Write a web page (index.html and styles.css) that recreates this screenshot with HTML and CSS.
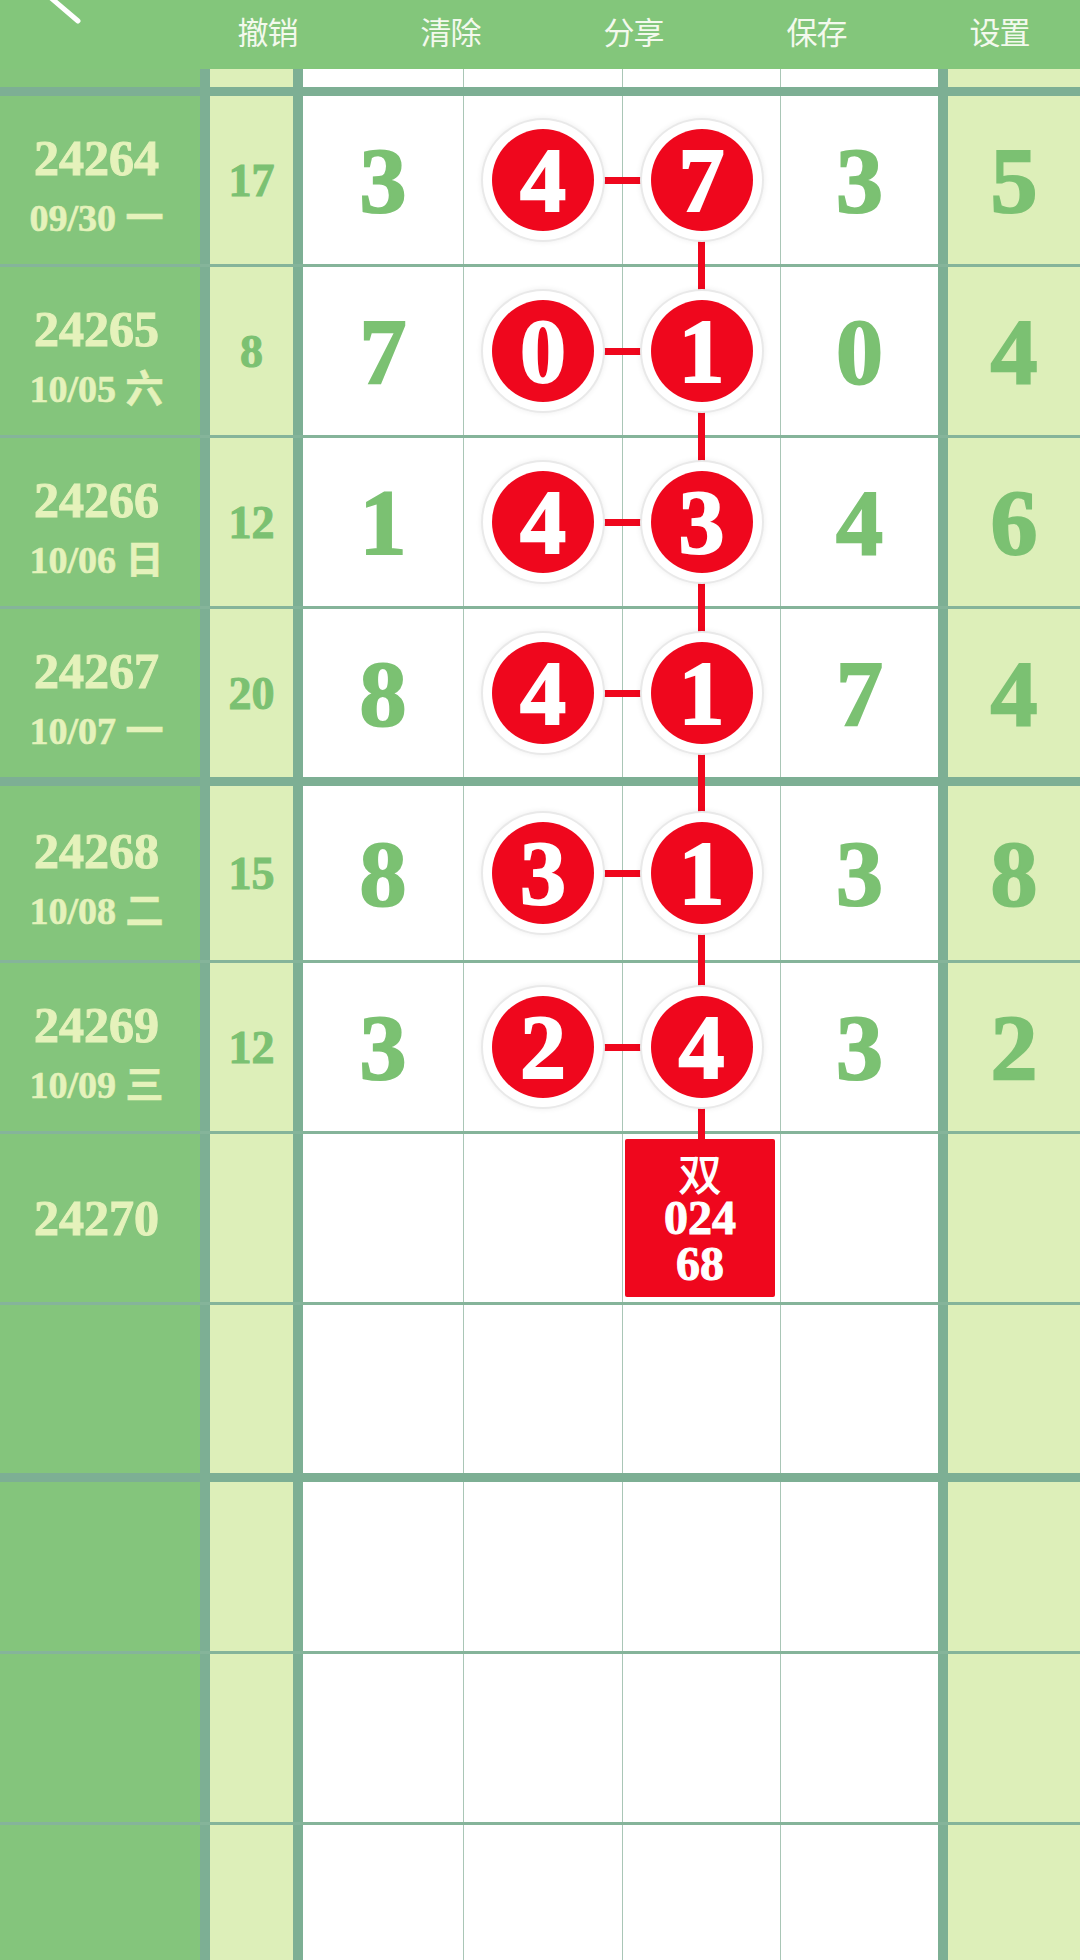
FILE: index.html
```html
<!DOCTYPE html>
<html lang="zh">
<head>
<meta charset="utf-8">
<title>走势图</title>
<link rel="stylesheet" href="styles.css">
</head>
<body>
<div class="page">
  <header class="topbar">
    <svg class="back" width="100" height="40" viewBox="0 0 100 40"><line x1="44" y1="-8" x2="78" y2="21" stroke="#ffffff" stroke-width="5" stroke-linecap="round"/></svg>
    <nav class="actions">
      <span class="act">撤销</span>
      <span class="act">清除</span>
      <span class="act">分享</span>
      <span class="act">保存</span>
      <span class="act">设置</span>
    </nav>
  </header>

  <main class="board">
    <div class="vline"></div>

    <div class="row r0"><div class="c a"></div><div class="c b"></div><div class="c w"></div><div class="c w"></div><div class="c w"></div><div class="c f"></div><div class="c g"></div></div>
    <div class="hl thick"></div>

    <div class="row">
      <div class="c a"><span class="num">24264</span><span class="date">09/30 一</span></div>
      <div class="c b"><span class="sum">17</span></div>
      <div class="c w"><span class="dg">3</span></div>
      <div class="c w"><span class="ball">4</span></div>
      <div class="c w"><span class="ball">7</span></div>
      <div class="c f"><span class="dg">3</span></div>
      <div class="c g"><span class="dg">5</span></div>
      <div class="link"></div>
    </div>
    <div class="hl"></div>

    <div class="row">
      <div class="c a"><span class="num">24265</span><span class="date">10/05 六</span></div>
      <div class="c b"><span class="sum">8</span></div>
      <div class="c w"><span class="dg">7</span></div>
      <div class="c w"><span class="ball">0</span></div>
      <div class="c w"><span class="ball">1</span></div>
      <div class="c f"><span class="dg">0</span></div>
      <div class="c g"><span class="dg">4</span></div>
      <div class="link"></div>
    </div>
    <div class="hl"></div>

    <div class="row">
      <div class="c a"><span class="num">24266</span><span class="date">10/06 日</span></div>
      <div class="c b"><span class="sum">12</span></div>
      <div class="c w"><span class="dg">1</span></div>
      <div class="c w"><span class="ball">4</span></div>
      <div class="c w"><span class="ball">3</span></div>
      <div class="c f"><span class="dg">4</span></div>
      <div class="c g"><span class="dg">6</span></div>
      <div class="link"></div>
    </div>
    <div class="hl"></div>

    <div class="row">
      <div class="c a"><span class="num">24267</span><span class="date">10/07 一</span></div>
      <div class="c b"><span class="sum">20</span></div>
      <div class="c w"><span class="dg">8</span></div>
      <div class="c w"><span class="ball">4</span></div>
      <div class="c w"><span class="ball">1</span></div>
      <div class="c f"><span class="dg">7</span></div>
      <div class="c g"><span class="dg">4</span></div>
      <div class="link"></div>
    </div>
    <div class="hl thick"></div>

    <div class="row tall">
      <div class="c a"><span class="num">24268</span><span class="date">10/08 二</span></div>
      <div class="c b"><span class="sum">15</span></div>
      <div class="c w"><span class="dg">8</span></div>
      <div class="c w"><span class="ball">3</span></div>
      <div class="c w"><span class="ball">1</span></div>
      <div class="c f"><span class="dg">3</span></div>
      <div class="c g"><span class="dg">8</span></div>
      <div class="link"></div>
    </div>
    <div class="hl"></div>

    <div class="row">
      <div class="c a"><span class="num">24269</span><span class="date">10/09 三</span></div>
      <div class="c b"><span class="sum">12</span></div>
      <div class="c w"><span class="dg">3</span></div>
      <div class="c w"><span class="ball">2</span></div>
      <div class="c w"><span class="ball">4</span></div>
      <div class="c f"><span class="dg">3</span></div>
      <div class="c g"><span class="dg">2</span></div>
      <div class="link"></div>
    </div>
    <div class="hl"></div>

    <div class="row">
      <div class="c a single"><span class="num">24270</span></div>
      <div class="c b"></div>
      <div class="c w"></div>
      <div class="c w"></div>
      <div class="c w"><div class="pick"><span class="pk-cn">双</span><span class="pk-n">024</span><span class="pk-n">68</span></div></div>
      <div class="c f"></div>
      <div class="c g"></div>
    </div>
    <div class="hl"></div>

    <div class="row"><div class="c a"></div><div class="c b"></div><div class="c w"></div><div class="c w"></div><div class="c w"></div><div class="c f"></div><div class="c g"></div></div>
    <div class="hl thick"></div>

    <div class="row r9"><div class="c a"></div><div class="c b"></div><div class="c w"></div><div class="c w"></div><div class="c w"></div><div class="c f"></div><div class="c g"></div></div>
    <div class="hl"></div>

    <div class="row"><div class="c a"></div><div class="c b"></div><div class="c w"></div><div class="c w"></div><div class="c w"></div><div class="c f"></div><div class="c g"></div></div>
    <div class="hl"></div>

    <div class="row"><div class="c a"></div><div class="c b"></div><div class="c w"></div><div class="c w"></div><div class="c w"></div><div class="c f"></div><div class="c g"></div></div>
  </main>
</div>
</body>
</html>
```

FILE: styles.css
```css
html, body {
  margin: 0;
  padding: 0;
}
body {
  width: 1080px;
  height: 1960px;
  overflow: hidden;
  background: #ffffff;
  font-family: "Liberation Serif", "Noto Sans CJK SC", serif;
}
.page {
  width: 1080px;
  height: 1960px;
  overflow: hidden;
  display: flex;
  flex-direction: column;
}

/* top bar */
.topbar {
  position: relative;
  height: 69px;
  flex: 0 0 69px;
  background: #83c67b;
  overflow: hidden;
}
.back {
  position: absolute;
  left: 0;
  top: 0;
}
.actions {
  display: flex;
  padding-left: 176px;
  height: 69px;
  align-items: flex-start;
}
.act {
  flex: 0 0 183px;
  text-align: center;
  font-family: "Noto Sans CJK SC", sans-serif;
  font-size: 31px;
  line-height: 40px;
  margin-top: 11px;
  color: #f3f9ed;
  letter-spacing: -1px;
}

/* board */
.board {
  position: relative;
  display: flex;
  flex-direction: column;
}
.row {
  position: relative;
  display: grid;
  grid-template-columns: 210px 93px 161px 159px 158px 167px 132px;
  height: 168px;
  flex: 0 0 168px;
}
.row.r0 { height: 18px; flex-basis: 18px; }
.row.tall { height: 174px; flex-basis: 174px; }
.row.r9 { height: 169px; flex-basis: 169px; }
.hl {
  height: 3px;
  flex: 0 0 3px;
  background: #85b49a;
  position: relative;
  z-index: 1;
}
.hl.thick {
  height: 9px;
  flex-basis: 9px;
  background: #7daf94;
}
.c {
  box-sizing: border-box;
  display: flex;
  align-items: center;
  justify-content: center;
  min-width: 0;
}
.c.a {
  background: #84c57c;
  border-right: 10px solid #7daf94;
  flex-direction: column;
  padding-right: 7px;
  padding-top: 20px;
}
.c.a.single { padding-top: 0; }
.c.b {
  background: #ddefb9;
  border-right: 10px solid #7daf94;
}
.c.w {
  background: #ffffff;
  border-right: 1px solid #a9c6b6;
}
.c.f {
  background: #ffffff;
  border-right: 10px solid #7daf94;
}
.c.g {
  background: #ddefb9;
}

.num {
  font-weight: 700;
  font-size: 50px;
  line-height: 56px;
  color: #e5f2bb;
  -webkit-text-stroke: 1px #e5f2bb;
}
.date {
  font-weight: 700;
  font-size: 38px;
  line-height: 64px;
  color: #e5f2bb;
  -webkit-text-stroke: 0.6px #e5f2bb;
}
.sum {
  font-weight: 700;
  font-size: 46px;
  color: #7bc172;
  -webkit-text-stroke: 1px #7bc172;
}
.dg {
  font-weight: 700;
  font-size: 94px;
  line-height: 100px;
  color: #7bc172;
  -webkit-text-stroke: 2px #7bc172;
}
.ball {
  position: relative;
  z-index: 3;
  width: 102px;
  height: 102px;
  border-radius: 50%;
  background: #ef071d;
  color: #ffffff;
  font-weight: 700;
  font-size: 92px;
  line-height: 102px;
  text-align: center;
  -webkit-text-stroke: 2px #ffffff;
  box-shadow: 0 0 0 9px #ffffff, 0 0 0 11px #e9e9e9, 0 0 5px 12px rgba(0,0,0,0.05);
}

/* connectors */
.link {
  position: absolute;
  left: 543px;
  width: 158px;
  top: 50%;
  height: 7px;
  margin-top: -3px;
  background: #ef071d;
  z-index: 2;
}
.vline {
  position: absolute;
  left: 698px;
  width: 7px;
  top: 111px;
  height: 960px;
  background: #ef071d;
  z-index: 2;
}

.pick {
  position: relative;
  z-index: 3;
  box-sizing: border-box;
  width: 150px;
  height: 158px;
  margin-right: 3px;
  background: #ef071d;
  border-radius: 2px;
  display: flex;
  flex-direction: column;
  align-items: center;
  padding-top: 10px;
  color: #ffffff;
}
.pk-cn {
  font-family: "Noto Sans CJK SC", sans-serif;
  font-weight: 500;
  font-size: 44px;
  line-height: 46px;
}
.pk-n {
  font-weight: 700;
  font-size: 48px;
  line-height: 46px;
  -webkit-text-stroke: 1px #ffffff;
}
```
